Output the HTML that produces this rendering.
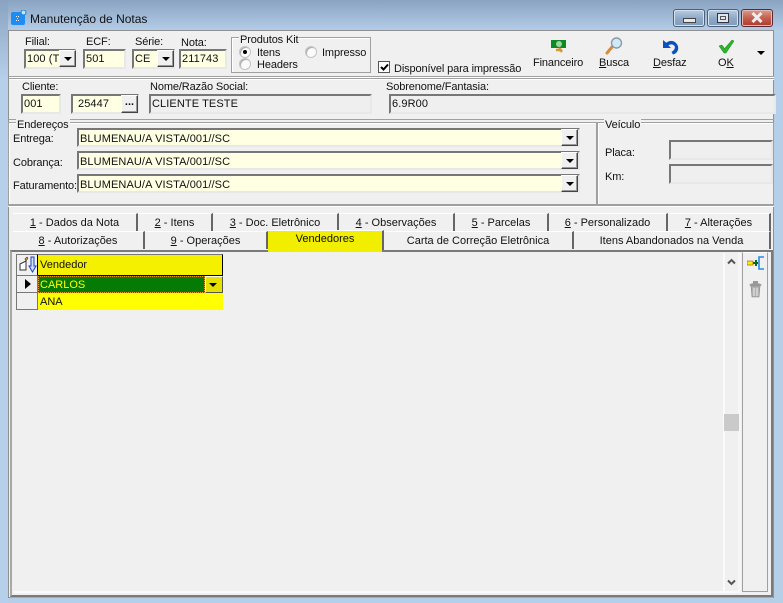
<!DOCTYPE html>
<html><head><meta charset="utf-8"><style>
html,body{margin:0;padding:0;width:783px;height:603px;overflow:hidden;background:#b6cfe9}
*{box-sizing:border-box}
body{font:11px "Liberation Sans",sans-serif;color:#111;position:relative}
div,span.a,svg{position:absolute}
.t{white-space:nowrap;line-height:13px;height:13px;margin-top:1px;letter-spacing:-.12px}
.f{border:2px solid;border-color:#777 #e8e8e8 #e8e8e8 #777;background:#ffffe3;white-space:nowrap;overflow:hidden;line-height:17px;padding-left:1px;font-size:11px;letter-spacing:.1px}
.g{background:#efefef}
.b,.p{background:#f0f0f0;border:1px solid;border-color:#fff #444 #444 #fff;box-shadow:inset -1px -1px 0 #999}
.b:after{content:"";position:absolute;left:50%;top:50%;margin:-2px 0 0 -4px;border:4px solid transparent;border-top:4px solid #000;border-bottom:0}
.tab{height:18px;background:#f0f0f0;border-right:2px solid #666;border-top:1px solid #fff;text-align:center;line-height:18px;white-space:nowrap;font-size:11px}
.r2{line-height:19px}
.gb{border:1px solid #a0a0a0;box-shadow:inset 1px 1px 0 #fff}
.lg{background:#f0f0f0;padding:0 1px;line-height:12px;height:12px;white-space:nowrap}
.rd{width:12px;height:12px;border-radius:50%;background:#fbfbfb;border:1px solid #c4c4c4;box-shadow:inset 1px 1px 0 #aaa}
u{text-decoration:underline}
</style></head><body>
<div style="left:0;top:0;width:783px;height:30px;background:linear-gradient(#8aa3c0,#b3cce8)"></div>
<div style="left:0;top:0;width:8px;height:603px;background:linear-gradient(#8aa3c0,#b6d0ec 80px)"></div>
<div style="left:8px;top:30px;width:766px;height:568px;background:#f0f0f0;border:1px solid #909090"></div>
<svg style="left:11px;top:10px" width="16" height="16" viewBox="0 0 16 16"><rect x="0" y="2" width="14" height="13" rx="2" fill="#1e8cf0"/><circle cx="12.500" cy="2.500" r="2.500" fill="#bfe4ff" stroke="#1e7cd0"/><rect x="5" y="6" width="1" height="1" fill="#fff"/><rect x="7" y="6" width="1" height="1" fill="#fff"/><rect x="6" y="8" width="1" height="1" fill="#fff"/><rect x="5" y="10" width="1" height="1" fill="#fff"/><rect x="7" y="10" width="1" height="1" fill="#fff"/></svg>
<div class="t" style="left:30px;top:12px;font-size:12px;color:#111;letter-spacing:0">Manutenção de Notas</div>
<div style="left:673px;top:9px;width:32px;height:18px;border:1px solid #4d6078;border-radius:3px;background:linear-gradient(#b9cde2,#8fa9c7 50%,#7f9cbd);box-shadow:inset 0 0 0 1px #d5e2ee"><div style="left:9px;top:8px;width:13px;height:5px;background:#e8e8e8;border:1px solid #444"></div></div>
<div style="left:707px;top:9px;width:32px;height:18px;border:1px solid #4d6078;border-radius:3px;background:linear-gradient(#b9cde2,#8fa9c7 50%,#7f9cbd);box-shadow:inset 0 0 0 1px #d5e2ee"><div style="left:9px;top:3px;width:12px;height:10px;background:#dfe6ee;border:1px solid #334;box-shadow:inset 0 0 0 2px #dfe6ee,inset 0 0 0 3px #555"></div></div>
<div style="left:741px;top:9px;width:32px;height:18px;border:1px solid #5a2b35;border-radius:3px;background:linear-gradient(#dc9d90,#c2604f 50%,#b0392c);box-shadow:inset 0 0 0 1px #e7b9b0"></div>
<svg style="left:750px;top:12px" width="14" height="11" viewBox="0 0 14 11"><path d="M2.500 1l9 9M11.500 1l-9 9" stroke="#eee" stroke-width="3" fill="none"/></svg>

<!-- toolbar -->
<div style="left:9px;top:76px;width:765px;height:2px;border-top:1px solid #a0a0a0;border-bottom:1px solid #fff"></div>
<div class="t" style="left:25px;top:35px">Filial:</div>
<div class="t" style="left:86px;top:35px">ECF:</div>
<div class="t" style="left:135px;top:35px">Série:</div>
<div class="t" style="left:181px;top:36px">Nota:</div>
<div class="f" style="left:24px;top:49px;width:52px;height:20px">100 (TI</div><div class="b" style="left:59px;top:50px;width:17px;height:17px"></div>
<div class="f" style="left:83px;top:49px;width:43px;height:20px">501</div>
<div class="f" style="left:132px;top:49px;width:43px;height:20px">CE</div><div class="b" style="left:157px;top:50px;width:17px;height:17px"></div>
<div class="f" style="left:179px;top:49px;width:48px;height:20px">211743</div>
<div class="gb" style="left:231px;top:37px;width:140px;height:36px"></div>
<div class="t lg" style="left:239px;top:33px">Produtos Kit</div>
<div class="rd" style="left:239px;top:46px"><div style="left:3px;top:3px;width:4px;height:4px;border-radius:50%;background:#000"></div></div>
<div class="t" style="left:257px;top:46px">Itens</div>
<div class="rd" style="left:239px;top:58px"></div>
<div class="t" style="left:257px;top:58px">Headers</div>
<div class="rd" style="left:305px;top:46px"></div>
<div class="t" style="left:322px;top:46px">Impresso</div>
<div style="left:378px;top:61px;width:12px;height:12px;background:#fff;border:1px solid #555"></div>
<svg style="left:380px;top:63px" width="9" height="9" viewBox="0 0 9 9"><path d="M1 4l2.500 2.500L8 1.500" fill="none" stroke="#000" stroke-width="2"/></svg>
<div class="t" style="left:394px;top:62px">Disponível para impressão</div>

<svg style="left:550px;top:39px" width="17" height="15" viewBox="0 0 17 15"><rect x="1" y="1" width="15" height="8" fill="#0c8a24"/><circle cx="9" cy="5" r="3" fill="#9fd3a0"/><path d="M6 11h6M9 9l3 4" stroke="#d59a2c" stroke-width="2.400" fill="none"/></svg>
<div class="t" style="left:533px;top:56px">Financeiro</div>
<svg style="left:605px;top:37px" width="18" height="18" viewBox="0 0 18 18"><path d="M2 16l5-6" stroke="#d98b3a" stroke-width="3" stroke-linecap="round"/><circle cx="11.500" cy="6" r="5" fill="#cfeaf7" stroke="#8c9aa8" stroke-width="1.400"/></svg>
<div class="t" style="left:599px;top:56px"><u>B</u>usca</div>
<svg style="left:661px;top:39px" width="18" height="16" viewBox="0 0 18 16"><path d="M2 1v8h8L7.500 6.500C9 5 12 5 13.500 7c1 2 0 4-3 6l1.500 2.500c4-1 6.500-5 4.500-9.500C14 1.500 9 0.500 5.300 3.800z" fill="#0b4fc0"/></svg>
<div class="t" style="left:653px;top:56px"><u>D</u>esfaz</div>
<svg style="left:718px;top:39px" width="17" height="15" viewBox="0 0 17 15"><path d="M1 7l3-1 2.500 3.500L14 1l2 1-8 12H6z" fill="#2bb52b" stroke="#1a801a" stroke-width=".5"/></svg>
<div class="t" style="left:718px;top:56px">O<u>K</u></div>
<div style="left:757px;top:51px;border:4px solid transparent;border-top:4px solid #000;border-bottom:0"></div>

<!-- client -->
<div style="left:9px;top:78px;width:765px;height:42px;border-top:1px solid #a0a0a0;border-bottom:1px solid #a0a0a0;box-shadow:inset 0 1px 0 #fff"></div>
<div class="t" style="left:22px;top:80px">Cliente:</div>
<div class="t" style="left:150px;top:80px">Nome/Razão Social:</div>
<div class="t" style="left:386px;top:80px">Sobrenome/Fantasia:</div>
<div class="f" style="left:21px;top:94px;width:40px;height:20px">001</div>
<div class="f" style="left:71px;top:94px;width:68px;height:20px;padding-left:5px">25447</div>
<div class="p" style="left:121px;top:95px;width:17px;height:18px;font:bold 11px/13px 'Liberation Sans',sans-serif;text-align:center">...</div>
<div class="f g" style="left:149px;top:94px;width:223px;height:20px">CLIENTE TESTE</div>
<div class="f g" style="left:389px;top:94px;width:387px;height:20px">6.9R00</div>

<!-- endereços -->
<div class="gb" style="left:8px;top:122px;width:589px;height:83px"></div>
<div class="t lg" style="left:16px;top:118px">Endereços</div>
<div class="t" style="left:13px;top:132px">Entrega:</div>
<div class="t" style="left:13px;top:156px">Cobrança:</div>
<div class="t" style="left:13px;top:179px">Faturamento:</div>
<div class="f" style="left:77px;top:128px;width:503px;height:19px;line-height:18px">BLUMENAU/A VISTA/001//SC</div><div class="b" style="left:561px;top:129px;width:17px;height:17px"></div>
<div class="f" style="left:77px;top:151px;width:503px;height:19px;line-height:18px">BLUMENAU/A VISTA/001//SC</div><div class="b" style="left:561px;top:152px;width:17px;height:17px"></div>
<div class="f" style="left:77px;top:174px;width:503px;height:19px;line-height:18px">BLUMENAU/A VISTA/001//SC</div><div class="b" style="left:561px;top:175px;width:17px;height:17px"></div>
<div class="gb" style="left:597px;top:122px;width:177px;height:83px"></div>
<div class="t lg" style="left:604px;top:118px">Veículo</div>
<div class="t" style="left:605px;top:146px">Placa:</div>
<div class="t" style="left:605px;top:170px">Km:</div>
<div class="f g" style="left:669px;top:140px;width:104px;height:20px"></div>
<div class="f g" style="left:669px;top:164px;width:104px;height:20px"></div>

<!-- tabs -->
<div style="left:8px;top:205px;width:766px;height:2px;border-top:1px solid #a0a0a0;border-bottom:1px solid #fff"></div>
<div class="tab" style="left:13px;top:213px;width:125px"><u>1</u> - Dados da Nota</div>
<div class="tab" style="left:138px;top:213px;width:75px"><u>2</u> - Itens</div>
<div class="tab" style="left:213px;top:213px;width:126px"><u>3</u> - Doc. Eletrônico</div>
<div class="tab" style="left:339px;top:213px;width:116px"><u>4</u> - Observações</div>
<div class="tab" style="left:455px;top:213px;width:94px"><u>5</u> - Parcelas</div>
<div class="tab" style="left:549px;top:213px;width:119px"><u>6</u> - Personalizado</div>
<div class="tab" style="left:668px;top:213px;width:103px"><u>7</u> - Alterações</div>
<div class="tab r2" style="left:13px;top:231px;width:132px"><u>8</u> - Autorizações</div>
<div class="tab r2" style="left:145px;top:231px;width:123px"><u>9</u> - Operações</div>
<div class="tab" style="left:268px;top:230px;width:116px;height:20px;background:#f1ee00;line-height:16px">Vendedores</div>
<div class="tab r2" style="left:384px;top:231px;width:190px">Carta de Correção Eletrônica</div>
<div class="tab r2" style="left:574px;top:231px;width:197px">Itens Abandonados na Venda</div>

<!-- page -->
<div style="left:10px;top:250px;width:763px;height:347px;border:2px solid;border-color:#7a7a7a #7a7a7a #7a7a7a #a8a8a8;box-shadow:0 1px 0 #aaa"></div>
<div style="left:268px;top:250px;width:114px;height:2px;background:#f1ee00"></div>
<div style="left:723px;top:253px;width:2px;height:339px;background:#fafafa"></div>
<div style="left:14px;top:591px;width:727px;height:2px;background:#fafafa"></div>
<div style="left:738px;top:253px;width:3px;height:339px;background:#f6f6f6"></div>
<div style="left:724px;top:414px;width:15px;height:17px;background:#cacaca"></div>
<svg style="left:727px;top:258px" width="9" height="7" viewBox="0 0 9 7"><path d="M1 5.500l3.500-3.500 3.500 3.500" fill="none" stroke="#555" stroke-width="2"/></svg>
<svg style="left:727px;top:579px" width="9" height="7" viewBox="0 0 9 7"><path d="M1 1.500l3.500 3.500 3.500-3.500" fill="none" stroke="#555" stroke-width="2"/></svg>
<div style="left:742px;top:252px;width:26px;height:340px;border:1px solid #a0a0a0;border-top-color:#fff"></div>
<svg style="left:747px;top:256px" width="18" height="16" viewBox="0 0 18 16"><rect x="0" y="5" width="6" height="4" fill="#f4ee00" stroke="#b05a20" stroke-width=".7"/><path d="M6 7h5M9 4v6" stroke="#0a6a1a" stroke-width="2"/><path d="M17 1h-5v12h5" fill="none" stroke="#2b8ae8" stroke-width="1.600"/></svg>
<svg style="left:749px;top:281px" width="13" height="17" viewBox="0 0 13 17"><ellipse cx="6.500" cy="4" rx="6" ry="2" fill="#9a9a9a"/><rect x="4" y="0" width="5" height="3" fill="#999"/><path d="M2 5h9l-1 11H3z" fill="#b0b0b0" stroke="#888" stroke-width=".6"/><path d="M5 7v8M8 7v8" stroke="#eee"/></svg>

<!-- grid -->
<div style="left:16px;top:254px;width:22px;height:22px;background:#f0f0f0;border:1px solid #777;border-right-color:#000"></div>
<svg style="left:19px;top:256px" width="18" height="18" viewBox="0 0 18 18"><path d="M1 8l6-3v9H1z" fill="#fff" stroke="#333"/><path d="M6 3l2-2 1 1-2 3z" fill="#e0a040" stroke="#333" stroke-width=".6"/><path d="M12 1h3v9h2l-3.500 6L10 10h2z" fill="#cfe0ff" stroke="#1c3fc0"/></svg>
<div style="left:38px;top:254px;width:185px;height:22px;background:#f5f000;border-top:1px solid #777;border-right:1px solid #000;border-bottom:1px solid #000;line-height:21px;padding-left:2px;font-size:11px">Vendedor</div>
<div style="left:16px;top:276px;width:22px;height:17px;background:#f0f0f0;border:1px solid #777;border-top:0"></div>
<div style="left:25px;top:279px;border:5px solid transparent;border-left:6px solid #000;border-right:0"></div>
<div style="left:16px;top:293px;width:22px;height:17px;background:#f0f0f0;border:1px solid #777;border-top:0"></div>
<div style="left:38px;top:276px;width:167px;height:17px;background:#057a05;border:1px dotted #e8a020;color:#ffff00;line-height:17px;padding-left:1px;font-size:11px">CARLOS</div>
<div style="left:205px;top:276px;width:18px;height:17px;background:#e6e200;border:1px solid;border-color:#fff #555 #555 #fff"><div style="left:3px;top:6px;border:4px solid transparent;border-top:4px solid #000;border-bottom:0"></div></div>
<div style="left:38px;top:293px;width:185px;height:17px;background:#ffff00;line-height:19px;padding-left:2px;font-size:11px">ANA</div>
</body></html>
